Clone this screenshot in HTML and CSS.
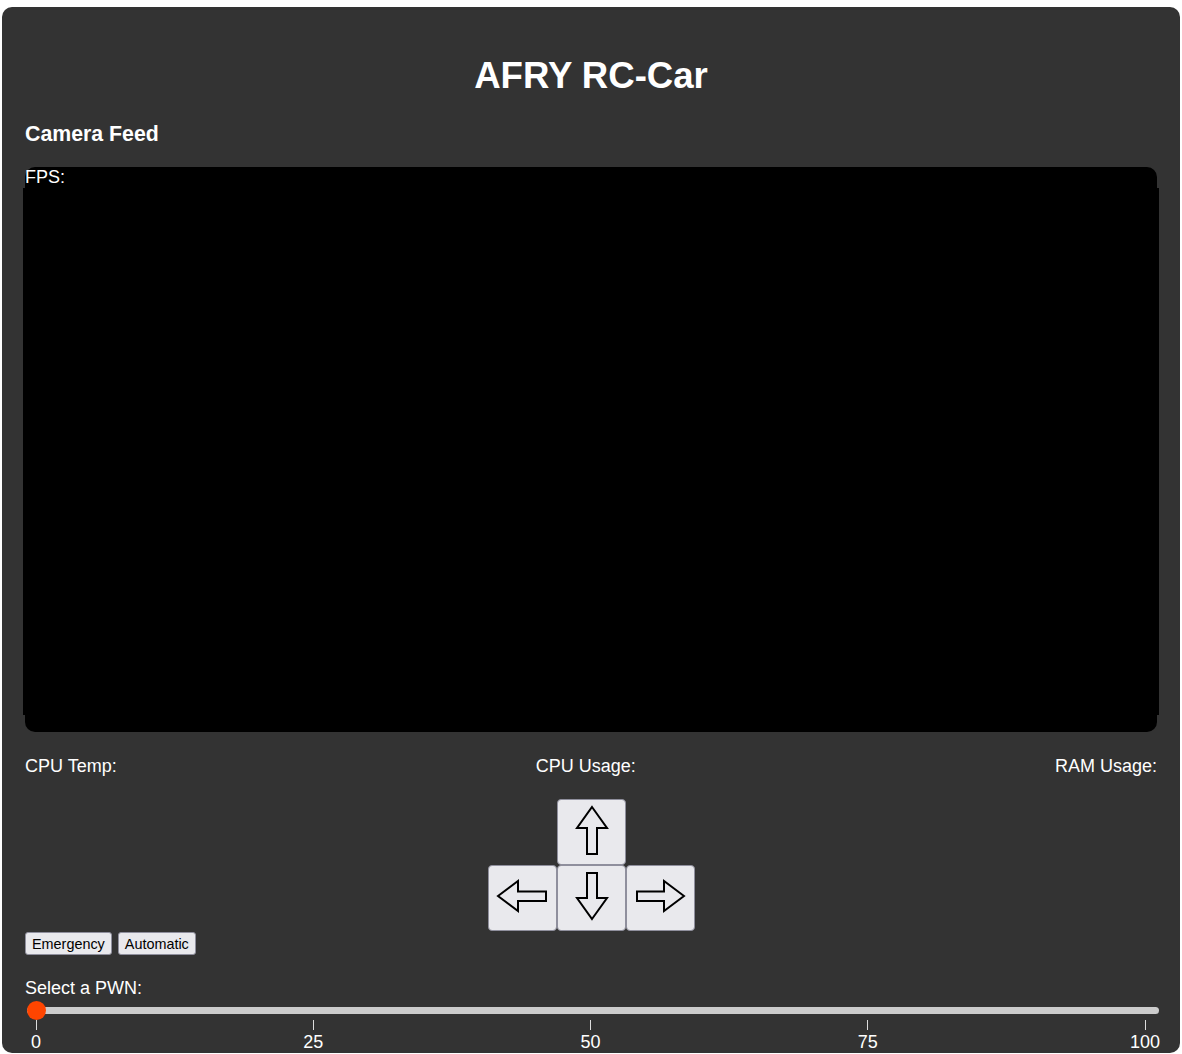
FILE: index.html
```html
<!DOCTYPE html>
<html lang="en">
<head>
<meta charset="utf-8">
<title>AFRY RC-Car</title>
<link rel="stylesheet" href="styles.css">
</head>
<body>
<main class="app">
  <h1 class="title">AFRY RC-Car</h1>
  <h2 class="section-title">Camera Feed</h2>
  <div class="camera">
    <div class="fps">FPS:</div>
    <div class="feed"></div>
  </div>
  <div class="stats">
    <span>CPU Temp:</span>
    <span>CPU Usage:</span>
    <span>RAM Usage:</span>
  </div>
  <div class="pad">
    <button class="key key-up" aria-label="Up">
      <svg viewBox="0 0 69 66" width="69" height="66"><path d="M35 8 L50 29 L40 29 L40 55 L30 55 L30 29 L20 29 Z" fill="none" stroke="#000" stroke-width="2" stroke-linejoin="miter"/></svg>
    </button>
    <button class="key key-left" aria-label="Left">
      <svg viewBox="0 0 69 66" width="69" height="66"><path d="M10 31 L30 16 L30 26.5 L58 26.5 L58 36 L30 36 L30 46 Z" fill="none" stroke="#000" stroke-width="2"/></svg>
    </button>
    <button class="key key-down" aria-label="Down">
      <svg viewBox="0 0 69 66" width="69" height="66"><path d="M35 54 L50 33 L40 33 L40 8 L30 8 L30 33 L20 33 Z" fill="none" stroke="#000" stroke-width="2"/></svg>
    </button>
    <button class="key key-right" aria-label="Right">
      <svg viewBox="0 0 69 66" width="69" height="66"><path d="M58 31 L38 16 L38 26.5 L11 26.5 L11 36 L38 36 L38 46 Z" fill="none" stroke="#000" stroke-width="2"/></svg>
    </button>
  </div>
  <div class="modes">
    <button class="mode-btn">Emergency</button>
    <button class="mode-btn">Automatic</button>
  </div>
  <label class="pwm-label" for="pwm">Select a PWN:</label>
  <input id="pwm" class="pwm" type="range" min="0" max="100" value="0">
  <div class="ticks">
    <div class="tick"><span class="tick-line"></span><span class="tick-label">0</span></div>
    <div class="tick"><span class="tick-line"></span><span class="tick-label">25</span></div>
    <div class="tick"><span class="tick-line"></span><span class="tick-label">50</span></div>
    <div class="tick"><span class="tick-line"></span><span class="tick-label">75</span></div>
    <div class="tick"><span class="tick-line"></span><span class="tick-label">100</span></div>
  </div>
</main>
</body>
</html>
```

FILE: styles.css
```css
html, body {
  margin: 0;
  padding: 0;
  background: #ffffff;
}

body {
  padding: 7px 2px 0 2px;
  font-family: "Liberation Sans", Arial, sans-serif;
  color: #ffffff;
}

.app {
  background: #333333;
  border-radius: 10px;
  padding: 48px 23px 2px 23px;
  display: flex;
  flex-direction: column;
}

.title {
  margin: 0;
  text-align: center;
  font-size: 36.6px;
  font-weight: bold;
  line-height: 41px;
}

.section-title {
  margin: 26px 0 0 0;
  font-size: 21.3px;
  font-weight: bold;
  line-height: 24px;
}

.camera {
  margin-top: 21px;
  background: #000000;
  border-radius: 10px;
  height: 565px;
  display: flex;
  flex-direction: column;
}

.fps {
  font-size: 18px;
  line-height: 18px;
  height: 21px;
  padding-top: 1px;
  box-sizing: border-box;
}

.feed {
  background: #000000;
  height: 527px;
  margin: 0 -2px;
}

.stats {
  margin-top: 24px;
  display: flex;
  justify-content: space-between;
  font-size: 18px;
  line-height: 21px;
}

.pad {
  margin-top: 22px;
  align-self: center;
  display: grid;
  grid-template-columns: 69px 69px 69px;
  grid-template-rows: 66px 66px;
}

.key {
  margin: 0;
  padding: 0;
  width: 69px;
  height: 66px;
  border: 1px solid #8f8f9d;
  border-radius: 4px;
  background: #e9e9ed;
  display: block;
  position: relative;
}

.key svg {
  position: absolute;
  left: -1px;
  top: -1px;
}

.key-up { grid-column: 2; grid-row: 1; }
.key-left { grid-column: 1; grid-row: 2; }
.key-down { grid-column: 2; grid-row: 2; }
.key-right { grid-column: 3; grid-row: 2; }

.modes {
  margin-top: 1px;
  display: flex;
  gap: 6px;
}

.mode-btn {
  margin: 0;
  height: 23px;
  padding: 0 6px;
  font-family: "Liberation Sans", Arial, sans-serif;
  font-size: 14.4px;
  color: #000000;
  background: #e9e9ed;
  border: 1px solid #8f8f9d;
  border-radius: 3px;
}

.pwm-label {
  margin-top: 23px;
  font-size: 18px;
  line-height: 21px;
}

.pwm {
  -webkit-appearance: none;
  appearance: none;
  margin: 2px -2px 0 2px;
  width: calc(100% + 0px);
  height: 18px;
  background: transparent;
  padding: 0;
}

.pwm::-webkit-slider-runnable-track {
  height: 7px;
  background: #cccccc;
  border-radius: 4px;
}

.pwm::-webkit-slider-thumb {
  -webkit-appearance: none;
  appearance: none;
  width: 19px;
  height: 19px;
  border-radius: 50%;
  background: #ff4500;
  border: none;
  margin-top: -6px;
}

.pwm::-moz-range-track {
  height: 7px;
  background: #cccccc;
  border-radius: 4px;
}

.pwm::-moz-range-thumb {
  width: 19px;
  height: 19px;
  border-radius: 50%;
  background: #ff4500;
  border: none;
}

.ticks {
  margin: 1px -3px 0 -4px;
  display: flex;
  justify-content: space-between;
}

.tick {
  width: 30px;
  display: flex;
  flex-direction: column;
  align-items: center;
}

.tick-line {
  width: 1px;
  height: 10px;
  background: #dddddd;
}

.tick-label {
  margin-top: 3px;
  font-size: 18px;
  line-height: 18px;
}
```
